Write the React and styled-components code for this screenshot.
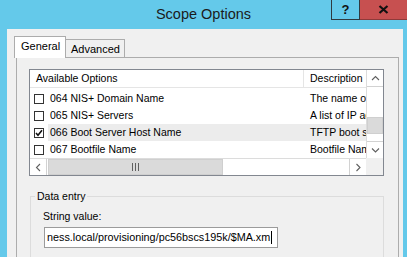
import React from "react"
import styled, { createGlobalStyle } from "styled-components"

const GlobalStyle = createGlobalStyle`
   html, body {
      margin: 0;
      padding: 0;
      background: #64c9ea;
   }
   * {
      box-sizing: border-box;
   }
`

const rows = [
   { label: "064 NIS+ Domain Name", desc: "The name of the client's NIS+ domain", checked: false },
   { label: "065 NIS+ Servers", desc: "A list of IP addresses indicating NIS+ servers", checked: false },
   { label: "066 Boot Server Host Name", desc: "TFTP boot server host name", checked: true, selected: true },
   { label: "067 Bootfile Name", desc: "Bootfile Name", checked: false },
]

function Chevron({ dir }) {
   const paths = {
      up: "M1 5 L4.5 1.5 L8 5",
      down: "M1 1.5 L4.5 5 L8 1.5",
      left: "M5 1 L1.5 4.5 L5 8",
      right: "M1.5 1 L5 4.5 L1.5 8",
   }
   const vertical = dir === "up" || dir === "down"
   return (
      <svg width={vertical ? 9 : 7} height={vertical ? 7 : 9} viewBox={vertical ? "0 0 9 7" : "0 0 7 9"}>
         <path d={paths[dir]} fill="none" stroke="#606060" strokeWidth="1.1" />
      </svg>
   )
}

export default function App() {
   return (
      <Window>
         <GlobalStyle />
         <TitleBar>
            <span />
            <Title>Scope Options</Title>
            <Controls>
               <HelpButton>?</HelpButton>
               <CloseButton>
                  <svg width="11" height="9" viewBox="0 0 11 9">
                     <path d="M1.5 1 L9.5 8 M9.5 1 L1.5 8" stroke="#111" strokeWidth="2.2" />
                  </svg>
               </CloseButton>
            </Controls>
         </TitleBar>

         <Body>
            <Tabs>
               <Tab $active>General</Tab>
               <Tab>Advanced</Tab>
            </Tabs>
            <TabPanel>
               <ListView>
                  <ListContent>
                     <HeaderRow>
                        <HeaderCell $first>Available Options</HeaderCell>
                        <HeaderCell>Description</HeaderCell>
                     </HeaderRow>
                     <Rows>
                        {rows.map((r) => (
                           <Row key={r.label}>
                              <Checkbox>
                                 {r.checked && (
                                    <svg width="8" height="8" viewBox="0 0 8 8">
                                       <path d="M1 4 L3 6.3 L7 1.2" fill="none" stroke="#111" strokeWidth="1.6" />
                                    </svg>
                                 )}
                              </Checkbox>
                              <LabelCell $selected={r.selected}>{r.label}</LabelCell>
                              <DescCell $selected={r.selected}>{r.desc}</DescCell>
                           </Row>
                        ))}
                     </Rows>
                  </ListContent>

                  <VScroll>
                     <ScrollButton $v>
                        <Chevron dir="up" />
                     </ScrollButton>
                     <VTrack>
                        <VThumb />
                     </VTrack>
                     <ScrollButton $v $end>
                        <Chevron dir="down" />
                     </ScrollButton>
                  </VScroll>

                  <HScroll>
                     <ScrollButton>
                        <Chevron dir="left" />
                     </ScrollButton>
                     <HThumb>
                        <Grip>
                           <i />
                           <i />
                           <i />
                        </Grip>
                     </HThumb>
                     <HTrack />
                     <ScrollButton $end>
                        <Chevron dir="right" />
                     </ScrollButton>
                  </HScroll>

                  <Corner />
               </ListView>

               <GroupBox>
                  <Legend>Data entry</Legend>
                  <FieldLabel>String value:</FieldLabel>
                  <TextBox>
                     ness.local/provisioning/pc56bscs195k/$MA.xm
                     <Caret />
                  </TextBox>
               </GroupBox>
            </TabPanel>
         </Body>
      </Window>
   )
}

const Window = styled.div`
   width: 407px;
   height: 257px;
   overflow: hidden;
   background: #64c9ea;
   display: flex;
   flex-direction: column;
   font-family: "Liberation Sans", Arial, sans-serif;
   color: #000;
`

const TitleBar = styled.div`
   height: 29px;
   flex: none;
   display: grid;
   grid-template-columns: 1fr auto 1fr;
`

const Title = styled.div`
   font-size: 14.5px;
   line-height: 29px;
   color: #1b1b1b;
`

const Controls = styled.div`
   justify-self: end;
   align-self: start;
   display: flex;
   height: 20px;
`

const HelpButton = styled.div`
   width: 29px;
   height: 20px;
   border: 1px solid #2f3a40;
   border-top: none;
   display: flex;
   align-items: center;
   justify-content: center;
   font-weight: bold;
   font-size: 13px;
   color: #111;
`

const CloseButton = styled.div`
   width: 47px;
   height: 20px;
   background: #c75050;
   border-bottom: 1px solid #8e3a3a;
   display: flex;
   align-items: center;
   justify-content: center;
`

const Body = styled.div`
   flex: 1;
   margin: 0 4px 0 7px;
   padding: 7px 0 0 7px;
   background: #f0f0f0;
   display: flex;
   flex-direction: column;
`

const Tabs = styled.div`
   display: flex;
   align-items: flex-end;
   height: 21px;
`

const Tab = styled.div`
   position: relative;
   z-index: ${(p) => (p.$active ? 2 : 1)};
   height: ${(p) => (p.$active ? "22px" : "18px")};
   margin-bottom: ${(p) => (p.$active ? "-1px" : "0")};
   margin-left: ${(p) => (p.$active ? "0" : "-1px")};
   padding: ${(p) => (p.$active ? "3px 0 0 6px" : "3px 0 0 5px")};
   width: ${(p) => (p.$active ? "52px" : "60px")};
   border: 1px solid #acacac;
   border-bottom: none;
   background: ${(p) => (p.$active ? "#fff" : "#f0f0f0")};
   font-size: 11px;
   line-height: 13px;
   color: #000;
`

const TabPanel = styled.div`
   height: 230px;
   margin: 0 4px 0 2px;
   padding: 11px 14px 0 12px;
   border: 1px solid #acacac;
   background: #f0f0f0;
   display: flex;
   flex-direction: column;
`

const ListView = styled.div`
   height: 107px;
   flex: none;
   border: 1px solid #828790;
   background: #fff;
   display: grid;
   grid-template-columns: 1fr 17px;
   grid-template-rows: 1fr 17px;
   font-size: 10.5px;
`

const ListContent = styled.div`
   overflow: hidden;
   min-width: 0;
`

const columns = "274px 1fr"

const HeaderRow = styled.div`
   display: grid;
   grid-template-columns: ${columns};
   height: 18px;
   border-bottom: 1px solid #e5e5e5;
`

const HeaderCell = styled.div`
   padding-left: 6px;
   line-height: 17px;
   white-space: nowrap;
   overflow: hidden;
   border-right: ${(p) => (p.$first ? "1px solid #e5e5e5" : "none")};
`

const Rows = styled.div`
   padding-top: 2px;
`

const Row = styled.div`
   display: grid;
   grid-template-columns: 18px 256px 1fr;
   height: 17px;
   align-items: stretch;
`

const Checkbox = styled.div`
   align-self: center;
   margin-left: 4px;
   width: 10px;
   height: 10px;
   border: 1px solid #333;
   background: #fff;
   display: flex;
   align-items: center;
   justify-content: center;
`

const LabelCell = styled.div`
   padding-left: 2px;
   line-height: 17px;
   white-space: nowrap;
   overflow: hidden;
   background: ${(p) => (p.$selected ? "#ececec" : "transparent")};
`

const DescCell = styled.div`
   padding-left: 6px;
   line-height: 17px;
   white-space: nowrap;
   overflow: hidden;
   background: ${(p) => (p.$selected ? "#ececec" : "transparent")};
`

const VScroll = styled.div`
   display: flex;
   flex-direction: column;
   border-left: 1px solid #dcdcdc;
   background: #fff;
`

const ScrollButton = styled.div`
   flex: none;
   width: ${(p) => (p.$v ? "100%" : "17px")};
   height: ${(p) => (p.$v ? "17px" : "100%")};
   display: flex;
   align-items: center;
   justify-content: center;
   background: #fff;
   border: 0 solid #d2d2d2;
   ${(p) =>
      p.$v
         ? p.$end
            ? "border-top-width: 1px;"
            : "border-bottom-width: 1px;"
         : p.$end
         ? "border-left-width: 1px;"
         : "border-right-width: 1px;"}
`

const VTrack = styled.div`
   flex: 1;
   padding-top: 30px;
`

const VThumb = styled.div`
   height: 17px;
   background: #dadada;
   border: 1px solid #cfcfcf;
`

const HScroll = styled.div`
   display: flex;
   border-top: 1px solid #dcdcdc;
   background: #fff;
`

const HThumb = styled.div`
   width: 175px;
   margin-left: 1px;
   background: #dadada;
   border: 1px solid #cfcfcf;
   display: flex;
   align-items: center;
   justify-content: center;
`

const Grip = styled.div`
   display: flex;
   gap: 2px;
   & i {
      display: block;
      width: 1px;
      height: 8px;
      background: #606060;
   }
`

const HTrack = styled.div`
   flex: 1;
`

const Corner = styled.div`
   background: #f0f0f0;
`

const GroupBox = styled.fieldset`
   margin: 14px 0 0 1px;
   padding: 0 12px 20px 12px;
   border: 1px solid #dcdcdc;
   min-width: 0;
   font-size: 10.5px;
`

const Legend = styled.legend`
   margin-left: -8px;
   padding: 0 2px;
   line-height: 13px;
`

const FieldLabel = styled.div`
   margin-top: 7px;
   line-height: 13px;
`

const TextBox = styled.div`
   margin: 4px 0 0 1px;
   width: 234px;
   height: 21px;
   padding-left: 2px;
   border: 1px solid #9b9b9b;
   background: #fff;
   font-size: 10.8px;
   line-height: 19px;
   white-space: nowrap;
   overflow: hidden;
   display: flex;
   align-items: center;
`

const Caret = styled.span`
   display: inline-block;
   width: 1px;
   height: 13px;
   margin-left: 1px;
   background: #000;
`
